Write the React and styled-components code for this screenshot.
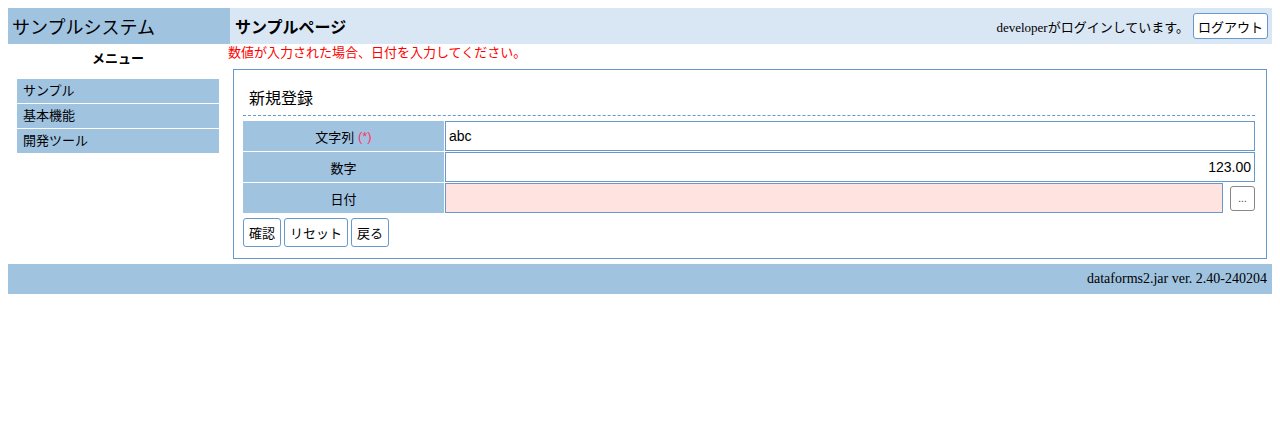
import React from 'react'
import styled, { createGlobalStyle } from 'styled-components'

const GlobalStyle = createGlobalStyle`
body {
    margin: 8px;
    background: #ffffff;
    font-family: "Liberation Sans", "Noto Sans CJK JP", sans-serif;
    color: #000;
}
`;

const menuItems = ['サンプル', '基本機能', '開発ツール']

const fields = [
    { label: '文字列', required: true, value: 'abc' },
    { label: '数字', value: '123.00', align: 'right' },
    { label: '日付', value: '', error: true, picker: true },
]

const App = () => {
    return (
        <>
            <GlobalStyle />
            <Header>
                <SystemName>サンプルシステム</SystemName>
                <PageBar>
                    <PageTitle>サンプルページ</PageTitle>
                    <LoginInfo>
                        developerがログインしています。
                        <SmallBtn>ログアウト</SmallBtn>
                    </LoginInfo>
                </PageBar>
            </Header>
            <Body>
                <Sidebar>
                    <MenuTitle>メニュー</MenuTitle>
                    <MenuList>
                        {menuItems.map((m) => (
                            <MenuItem key={m}>{m}</MenuItem>
                        ))}
                    </MenuList>
                </Sidebar>
                <Main>
                    <ErrorMsg>数値が入力された場合、日付を入力してください。</ErrorMsg>
                    <FormBox>
                        <FormTitle>新規登録</FormTitle>
                        <FormTable>
                            {fields.map((f) => (
                                <FieldRow key={f.label}>
                                    <FieldLabel>
                                        {f.label}
                                        {f.required && <Req> (*)</Req>}
                                    </FieldLabel>
                                    <FieldCell>
                                        <TextInput
                                            readOnly
                                            value={f.value}
                                            $align={f.align}
                                            $error={f.error}
                                        />
                                        {f.picker && <PickerBtn>...</PickerBtn>}
                                    </FieldCell>
                                </FieldRow>
                            ))}
                        </FormTable>
                        <ButtonRow>
                            <ActionBtn>確認</ActionBtn>
                            <ActionBtn>リセット</ActionBtn>
                            <ActionBtn>戻る</ActionBtn>
                        </ButtonRow>
                    </FormBox>
                </Main>
            </Body>
            <Footer>dataforms2.jar ver. 2.40-240204</Footer>
        </>
    )
}

const Header = styled.header`
display: flex;
height: 36px;
`;

const SystemName = styled.div`
width: 218px;
padding-left: 4px;
background: #a0c3e0;
font-size: 18px;
display: flex;
align-items: center;
`;

const PageBar = styled.div`
flex: 1;
background: #d9e6f3;
display: flex;
align-items: center;
justify-content: space-between;
padding: 0 4px 0 5px;
`;

const PageTitle = styled.h1`
margin: 0;
font-size: 16px;
font-weight: bold;
`;

const LoginInfo = styled.div`
display: flex;
align-items: center;
gap: 4px;
font-family: "Liberation Serif", "Noto Sans CJK JP", serif;
font-size: 13px;
`;

const SmallBtn = styled.button`
height: 26px;
padding: 0 4px;
background: #ffffff;
border: 1px solid #6699cc;
border-radius: 3px;
font-family: "Liberation Sans", "Noto Sans CJK JP", sans-serif;
font-size: 13px;
color: #000;
`;

const Body = styled.div`
display: flex;
`;

const Sidebar = styled.nav`
width: 220px;
flex-shrink: 0;
padding: 0 9px;
box-sizing: border-box;
`;

const MenuTitle = styled.div`
text-align: center;
font-weight: bold;
font-size: 13px;
line-height: 18px;
padding: 6px 0 11px;
`;

const MenuList = styled.ul`
list-style: none;
margin: 0;
padding: 0;
display: flex;
flex-direction: column;
gap: 1px;
`;

const MenuItem = styled.li`
background: #a0c3e0;
height: 24px;
line-height: 24px;
padding-left: 6px;
font-size: 13px;
`;

const Main = styled.main`
flex: 1;
min-width: 0;
`;

const ErrorMsg = styled.div`
color: #ff0000;
font-size: 13px;
line-height: 18px;
height: 18px;
margin-bottom: 7px;
`;

const FormBox = styled.section`
margin: 0 5px;
border: 1px solid #6699cc;
padding: 10px 11px 11px 9px;
`;

const FormTitle = styled.h2`
margin: 0;
font-size: 16px;
font-weight: normal;
line-height: 20px;
padding: 9px 6px 6px;
border-bottom: 1px dashed #6699cc;
`;

const FormTable = styled.div`
display: grid;
grid-template-columns: 201px 1fr;
row-gap: 1px;
column-gap: 1px;
margin-top: 5px;
`;

const FieldRow = styled.div`
display: contents;
`;

const FieldLabel = styled.div`
background: #a0c3e0;
height: 30px;
display: flex;
align-items: center;
justify-content: center;
font-size: 13px;
`;

const Req = styled.span`
color: #ff3366;
white-space: pre;
`;

const FieldCell = styled.div`
display: flex;
align-items: center;
gap: 7px;
`;

const TextInput = styled.input`
flex: 1;
min-width: 0;
height: 30px;
box-sizing: border-box;
border: 1px solid #6699cc;
background: ${(p) => (p.$error ? '#ffe3e0' : '#ffffff')};
text-align: ${(p) => p.$align || 'left'};
padding: 0 3px;
font-family: "Liberation Sans", "Noto Sans CJK JP", sans-serif;
font-size: 14px;
color: #000;
outline: none;
`;

const PickerBtn = styled.button`
width: 25px;
height: 25px;
padding: 0;
background: #ffffff;
border: 1px solid #888888;
border-radius: 3px;
font-size: 10px;
color: #333;
`;

const ButtonRow = styled.div`
display: flex;
gap: 3px;
margin-top: 5px;
`;

const ActionBtn = styled.button`
height: 29px;
padding: 0 5px;
background: #ffffff;
border: 1px solid #6699cc;
border-radius: 3px;
font-family: "Liberation Sans", "Noto Sans CJK JP", sans-serif;
font-size: 13px;
color: #000;
`;

const Footer = styled.footer`
margin-top: 5px;
height: 30px;
background: #a0c3e0;
display: flex;
align-items: center;
justify-content: flex-end;
padding-right: 5px;
font-family: "Liberation Serif", serif;
font-size: 14px;
`;

export default App
